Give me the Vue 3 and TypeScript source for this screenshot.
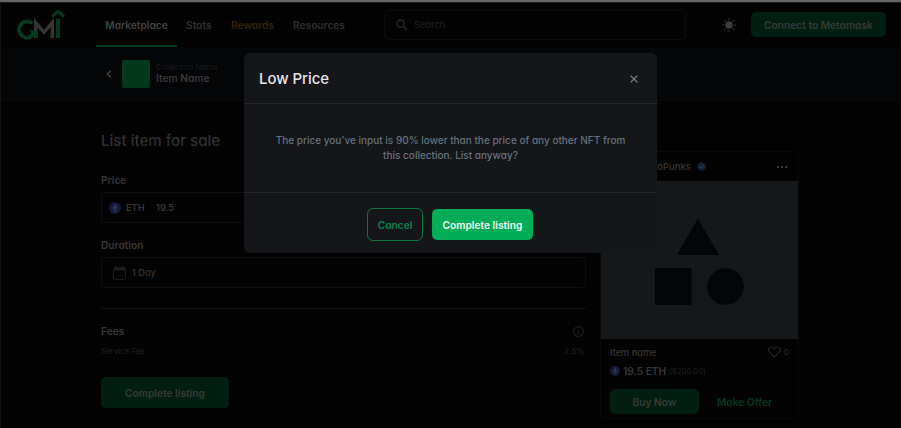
<script setup lang="ts">
interface NavLink {
  label: string
  kind: string
}

const links: NavLink[] = [
  { label: 'Marketplace', kind: 'active' },
  { label: 'Stats', kind: 'stats' },
  { label: 'Rewards', kind: 'gold' },
  { label: 'Resources', kind: 'resources' },
]
const rays: number[] = [0, 45, 90, 135, 180, 225, 270, 315]
</script>

<template>
  <div class="page">
    <header class="header">
      <svg class="logo" viewBox="0 0 50 33" fill="none">
        <path d="M20.7 30V14.6L29 24.3L37.3 14.6V30" stroke="#353535" stroke-width="3.4" />
        <path d="M17.6 15.4A8.2 8.2 0 1 0 16.8 28.2" stroke="#053a1e" stroke-width="3.8" />
        <path d="M13.5 22.5H22.7V30H19.6V27.5L15.5 30.8L12.8 28.4L16.8 25Z" fill="#053a1e" />
        <path d="M43 30V10.8" stroke="#053a1e" stroke-width="4" />
        <path d="M37 8.6L43 3.2L49 8.6" stroke="#053a1e" stroke-width="3" />
      </svg>
      <nav class="nav">
        <a v-for="link in links" :key="link.label" class="link" :class="link.kind"><span>{{ link.label }}</span></a>
      </nav>
      <div class="search">
        <svg width="12" height="12" viewBox="0 0 12 12" fill="none" stroke="#26292b" stroke-width="1.4">
          <circle cx="4.6" cy="4.6" r="3.6" /><path d="M7.3 7.3L11.3 11.3" />
        </svg>
        <span>Search</span>
      </div>
      <svg class="sun" viewBox="-8 -8 16 16">
        <circle r="3.8" fill="#3b3b3b" />
        <path v-for="ray in rays" :key="ray" d="M-.8 -5.2L0 -7.4L.8 -5.2Z" fill="#3b3b3b" :transform="`rotate(${ray})`" />
      </svg>
      <button class="btn connect"><span>Connect to Metamask</span></button>
    </header>

    <section class="item-bar">
      <svg class="back" width="6" height="8" viewBox="0 0 6 8" fill="none" stroke="#454545" stroke-width="1.3">
        <path d="M4.8 .7L1.4 4L4.8 7.3" />
      </svg>
      <div class="thumb"></div>
      <div class="names">
        <span class="collection">Collection Name</span>
        <span class="item">Item Name</span>
      </div>
    </section>

    <main class="main">
      <section class="form">
        <h1><span>List item for sale</span></h1>
        <label class="price-label">Price</label>
        <div class="field price">
          <svg class="eth" viewBox="0 0 12 12"><circle cx="6" cy="6" r="6" fill="#15193a" /><path d="M6 1.5L8.8 6.2L6 7.8L3.2 6.2ZM3.4 7L6 10.5L8.6 7L6 8.5Z" fill="#30354c" /></svg>
          <span class="unit">ETH</span><span>19.5</span>
        </div>
        <label class="duration-label">Duration</label>
        <div class="field duration">
          <svg width="13" height="14" viewBox="0 0 13 14" fill="none" stroke="#1b1e21">
            <rect x=".6" y="1.6" width="11.8" height="11.8" rx="1" /><path d="M1 3H12" stroke-width="3" /><path d="M3 0V2M10 0V2" stroke-width="1.5" />
          </svg>
          <span>1 Day</span>
        </div>
        <div class="rule"></div>
        <div class="row fees">
          <span>Fees</span>
          <svg width="11" height="11" viewBox="0 0 11 11" fill="none" stroke="#26282a"><circle cx="5.5" cy="5.5" r="4.9" /><path d="M5.5 5V8.2M5.5 2.7V3.9" /></svg>
        </div>
        <div class="row service"><span>Service Fee</span><span>2.5%</span></div>
        <button class="btn submit"><span>Complete listing</span></button>
      </section>

      <article class="card">
        <div class="card-head">
          <span class="creator">CryptoPunks</span>
          <svg class="verified" width="9" height="9" viewBox="0 0 9 9">
            <path d="M4.5 0L5.7 .8L7.2 .8L7.8 2.2L9 3.2L8.6 4.6L8.9 6L7.6 6.9L6.9 8.3L5.4 8.2L4.1 9L3 8L1.5 7.7L1.1 6.2L0 5L.6 3.7L.6 2.2L2 1.6L3 .5Z" fill="#122435" />
            <path d="M2.5 4.5L4 6L6.8 3" fill="none" stroke="#36414a" />
          </svg>
          <span class="dots"><i></i><i></i><i></i></span>
        </div>
        <div class="art">
          <svg viewBox="0 0 197 158" fill="#040506">
            <path d="M97 37.5L117.5 73Q118 74 117 74H77Q76 74 76.5 73Z" /><rect x="54" y="87" width="36.5" height="37" /><circle cx="124.5" cy="105.5" r="18.3" />
          </svg>
        </div>
        <div class="card-title">
          <span>Item name</span>
          <svg width="13" height="12" viewBox="0 0 13 12" fill="none" stroke="#202325" stroke-width="1.2"><path d="M6.5 11L1.7 6.2C-.5 3.8 1 1 3.5 1Q5.5 1 6.5 3Q7.5 1 9.5 1C12 1 13.5 3.8 11.3 6.2Z" /></svg>
          <span class="likes">0</span>
        </div>
        <div class="card-price">
          <svg class="eth" viewBox="0 0 12 12"><circle cx="6" cy="6" r="6" fill="#15193a" /><path d="M6 1.5L8.8 6.2L6 7.8L3.2 6.2ZM3.4 7L6 10.5L8.6 7L6 8.5Z" fill="#30354c" /></svg>
          <strong>19.5 ETH</strong><span class="fiat">($200.00)</span>
        </div>
        <div class="card-actions">
          <button class="btn buy"><span>Buy Now</span></button>
          <button class="offer"><span>Make Offer</span></button>
        </div>
      </article>
    </main>

    <div class="modal" role="dialog">
      <header class="modal-head">
        <h2>Low Price</h2>
        <svg width="8" height="8" viewBox="0 0 8 8" fill="none" stroke="#7c8790" stroke-width="1.2"><path d="M.6 .6L7.4 7.4M7.4 .6L.6 7.4" /></svg>
      </header>
      <p class="message"><span>The price you’ve input is 90% lower than the price of any other NFT from</span><br><span>this collection. List anyway?</span></p>
      <footer class="modal-foot">
        <button class="cancel"><span>Cancel</span></button>
        <button class="confirm"><span>Complete listing</span></button>
      </footer>
    </div>
  </div>
</template>

<style>
body {
  background: #020202;
  overflow: hidden;
}
</style>

<style scoped>
* {
  box-sizing: border-box;
}
.page {
  width: 901px;
  height: 428px;
  overflow: hidden;
  position: relative;
  background: #020202;
  border-top: 2px solid #636363;
  box-shadow: inset 1px 0 #111, inset -1px 0 #0b0b0b, inset 0 1px #1d1d1d;
  font-family: Inter, "Liberation Sans", sans-serif;
  font-feature-settings: "cv11";
  font-size: 10.2px;
  color: #363636;
  white-space: nowrap;
}
button {
  font: inherit;
  font-feature-settings: inherit;
  border: 0;
  padding: 0;
  display: flex;
  align-items: center;
  justify-content: center;
  background: none;
}
svg {
  display: block;
  flex: none;
}
.btn {
  background: #021e10;
  color: #353a37;
  border-radius: 5px;
  font-weight: 600;
}
.header {
  height: 45px;
  display: flex;
  align-items: center;
  padding-left: 15px;
}
.logo {
  width: 50px;
  height: 33px;
}
.nav {
  height: 45px;
  display: flex;
  margin-left: 31px;
}
.link {
  display: flex;
  align-items: center;
  font-weight: 600;
  color: #2d3032;
}
.link.active {
  width: 81px;
  justify-content: center;
  color: #414141;
  border-bottom: 2px solid #033a1d;
  padding-top: 2px;
}
.link.stats {
  margin-left: 9px;
  width: 45px;
}
.link.gold {
  width: 62px;
  color: #332207;
}
.link.resources {
  width: 91px;
}
.search {
  width: 302px;
  height: 30px;
  border: 1px solid #0b0c0d;
  border-radius: 5px;
  display: flex;
  align-items: center;
  gap: 6px;
  padding-left: 11px;
  color: #1b1d1f;
  font-size: 9.2px;
  font-weight: 500;
}
.sun {
  width: 16px;
  height: 16px;
  margin-left: 35px;
}
.connect {
  width: 135px;
  height: 25px;
  margin-left: 14px;
}
.item-bar {
  height: 54px;
  display: flex;
  align-items: center;
  padding-left: 106px;
  background: #030507;
  border-bottom: 1px solid #07090a;
  box-shadow: inset 1px 0 #111, inset -1px 0 #0b0b0b;
}
.thumb {
  width: 28px;
  height: 28px;
  margin-left: 10px;
  border-radius: 2px;
  background: #033a1d;
}
.names {
  margin-left: 6px;
  padding-bottom: 1px;
  display: flex;
  flex-direction: column;
  color: #393939;
  font-weight: 600;
}
.collection {
  font-size: 7.8px;
  line-height: 11px;
  color: #17191a;
  font-weight: 500;
}
.item {
  line-height: 11px;
}
.main {
  display: flex;
  padding-left: 101px;
}
.form {
  width: 485px;
  padding-top: 30px;
}
h1 {
  margin: 0;
  font-size: 15.1px;
  line-height: 20px;
  font-weight: 500;
  color: #303030;
}
label {
  display: block;
  line-height: 14px;
  font-weight: 600;
}
.price-label {
  margin-top: 22px;
}
.duration-label {
  margin-top: 15px;
}
.field {
  height: 31px;
  border: 1px solid #0d0e0e;
  border-radius: 4px;
  display: flex;
  align-items: center;
}
.price {
  margin-top: 5px;
  padding-left: 7px;
  font-size: 9.2px;
  font-weight: 600;
}
.eth {
  width: 12px;
  height: 12px;
}
.unit {
  width: 30px;
  margin-left: 5px;
}
.duration {
  margin-top: 5px;
  padding-left: 11px;
  gap: 6px;
  font-size: 9.2px;
  font-weight: 500;
}
.rule {
  height: 1px;
  margin-top: 20px;
  background: #101111;
}
.row {
  display: flex;
  justify-content: space-between;
  align-items: center;
}
.fees {
  margin-top: 15px;
  height: 14px;
  padding-right: 2px;
  font-weight: 600;
}
.service {
  height: 12px;
  margin-top: 7px;
  font-size: 7.8px;
  font-weight: 500;
  color: #1b1d1f;
  padding-right: 2px;
}
.submit {
  margin-top: 20px;
  width: 128px;
  height: 31px;
}
.card {
  margin: 50px 0 0 14px;
  width: 199px;
  height: 268px;
  border: 1px solid #08090a;
  border-radius: 4px;
}
.card-head {
  height: 29px;
  padding: 0 11px 0 31px;
  display: flex;
  align-items: center;
  font-size: 9.5px;
  font-weight: 500;
}
.verified {
  margin-left: 6px;
}
.dots {
  display: flex;
  gap: 2px;
  margin-left: auto;
}
.dots i {
  width: 2px;
  height: 2px;
  background: #393939;
}
.art {
  height: 158px;
  background: #14181a;
}
.art svg {
  width: 197px;
  height: 158px;
}
.card-title {
  height: 14px;
  margin-top: 6px;
  padding: 0 9px;
  display: flex;
  align-items: center;
  font-size: 9.2px;
  font-weight: 500;
}
.card-title svg {
  margin-left: auto;
}
.likes {
  margin-left: 3px;
  font-size: 8px;
  color: #25282a;
}
.card-price {
  height: 14px;
  margin-top: 5px;
  padding-left: 9px;
  display: flex;
  align-items: center;
}
.card-price .eth {
  width: 10px;
  height: 10px;
}
.card-price strong {
  margin-left: 3px;
  font-weight: 600;
}
.fiat {
  margin-left: 3px;
  font-size: 7.6px;
  font-weight: 500;
  color: #1b1d1f;
}
.card-actions {
  display: flex;
  margin-top: 11px;
  padding-left: 9px;
}
.buy {
  width: 89px;
  height: 25px;
}
.offer {
  width: 91px;
  font-weight: 600;
  color: #033a1d;
}
.modal {
  position: absolute;
  left: 244px;
  top: 51px;
  width: 413px;
  height: 200px;
  border-radius: 6px;
  background: #15161a;
}
.modal-head {
  height: 51px;
  padding: 2px 19px 0 15px;
  display: flex;
  align-items: center;
  justify-content: space-between;
  border-bottom: 1px solid #24262a;
}
h2 {
  margin: 0;
  font-size: 14.9px;
  font-weight: 500;
  color: #e6e6e7;
}
.message {
  height: 88px;
  margin: 0;
  padding-top: 29px;
  text-align: center;
  font-size: 10px;
  font-weight: 500;
  line-height: 15px;
  color: #65717a;
}
.modal-foot {
  display: flex;
  gap: 9px;
  padding: 15px 0 0 123px;
  border-top: 1px solid #24262a;
  font-weight: 600;
}
.cancel {
  width: 56px;
  height: 33px;
  border: 1px solid #08783e;
  border-radius: 6px;
  color: #06814a;
}
.confirm {
  width: 101px;
  height: 31px;
  margin-top: 1px;
  border-radius: 5px;
  background: #03ac57;
  color: #effaf4;
}
</style>
